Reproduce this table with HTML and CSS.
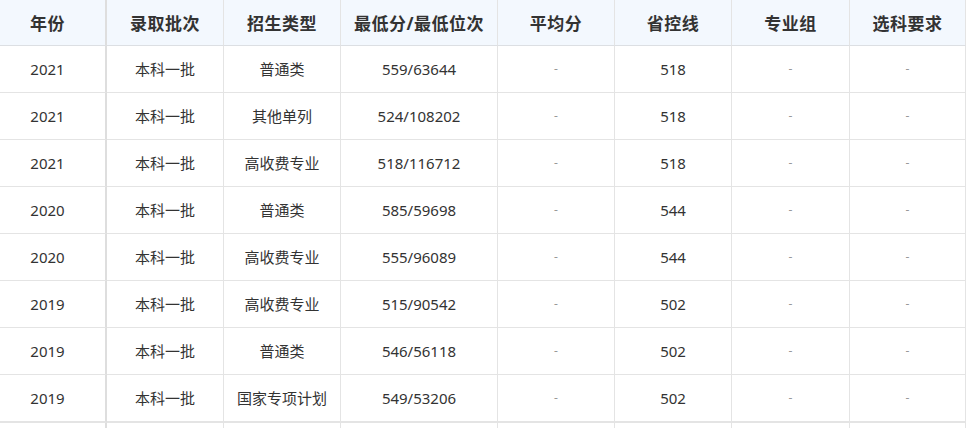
FILE: index.html
```html
<!DOCTYPE html>
<html lang="zh">
<head>
<meta charset="utf-8">
<title>录取分数</title>
<link rel="stylesheet" href="styles.css">
</head>
<body>
<div class="wrap">
<table class="score">
<thead>
<tr>
<th class="c1">年份</th>
<th class="c2">录取批次</th>
<th class="c3">招生类型</th>
<th class="c4">最低分/最低位次</th>
<th class="c5">平均分</th>
<th class="c6">省控线</th>
<th class="c7">专业组</th>
<th class="c8">选科要求</th>
</tr>
</thead>
<tbody>
<tr><td>2021</td><td>本科一批</td><td>普通类</td><td>559/63644</td><td class="dash">-</td><td>518</td><td class="dash">-</td><td class="dash">-</td></tr>
<tr><td>2021</td><td>本科一批</td><td>其他单列</td><td>524/108202</td><td class="dash">-</td><td>518</td><td class="dash">-</td><td class="dash">-</td></tr>
<tr><td>2021</td><td>本科一批</td><td>高收费专业</td><td>518/116712</td><td class="dash">-</td><td>518</td><td class="dash">-</td><td class="dash">-</td></tr>
<tr><td>2020</td><td>本科一批</td><td>普通类</td><td>585/59698</td><td class="dash">-</td><td>544</td><td class="dash">-</td><td class="dash">-</td></tr>
<tr><td>2020</td><td>本科一批</td><td>高收费专业</td><td>555/96089</td><td class="dash">-</td><td>544</td><td class="dash">-</td><td class="dash">-</td></tr>
<tr><td>2019</td><td>本科一批</td><td>高收费专业</td><td>515/90542</td><td class="dash">-</td><td>502</td><td class="dash">-</td><td class="dash">-</td></tr>
<tr><td>2019</td><td>本科一批</td><td>普通类</td><td>546/56118</td><td class="dash">-</td><td>502</td><td class="dash">-</td><td class="dash">-</td></tr>
<tr class="last"><td>2019</td><td>本科一批</td><td>国家专项计划</td><td>549/53206</td><td class="dash">-</td><td>502</td><td class="dash">-</td><td class="dash">-</td></tr>
<tr class="tail"><td></td><td></td><td></td><td></td><td></td><td></td><td></td><td></td></tr>
</tbody>
</table>
</div>
</body>
</html>
```
FILE: styles.css
```css
html, body {
  margin: 0;
  padding: 0;
  background: #fff;
  overflow: hidden;
}
.wrap {
  margin-left: -10px;
  width: 976px;
}
.score {
  border-collapse: separate;
  border-spacing: 0;
  table-layout: fixed;
  width: 976px;
  font-family: "Noto Sans", "Noto Sans CJK SC", sans-serif;
  color: #333;
}
.score th, .score td {
  box-sizing: border-box;
  text-align: center;
  padding: 0;
  border-right: 1px solid #e4e4e4;
  border-bottom: 1px solid #e4e4e4;
}
.score th {
  height: 46px;
  background: #f3f8fe;
  font-size: 17px;
  font-weight: 700;
  color: #333;
  border-bottom-color: #dcdfe3;
  letter-spacing: 0.5px;
}
.score td {
  height: 47px;
  padding-bottom: 1px;
  font-size: 15px;
  color: #333;
}
.score th:first-child, .score td:first-child {
  border-right: 2px solid #dedede;
}
.score td.dash {
  color: #999;
  font-size: 12px;
}
.score tr.last td {
  border-bottom-width: 2px;
  height: 48px;
}
.score tr.tail td {
  height: 40px;
}
.c1 { width: 117px; }
.c2 { width: 117px; }
.c3 { width: 117px; }
.c4 { width: 157px; }
.c5 { width: 117px; }
.c6 { width: 117px; }
.c7 { width: 118px; }
.c8 { width: 116px; }
```
